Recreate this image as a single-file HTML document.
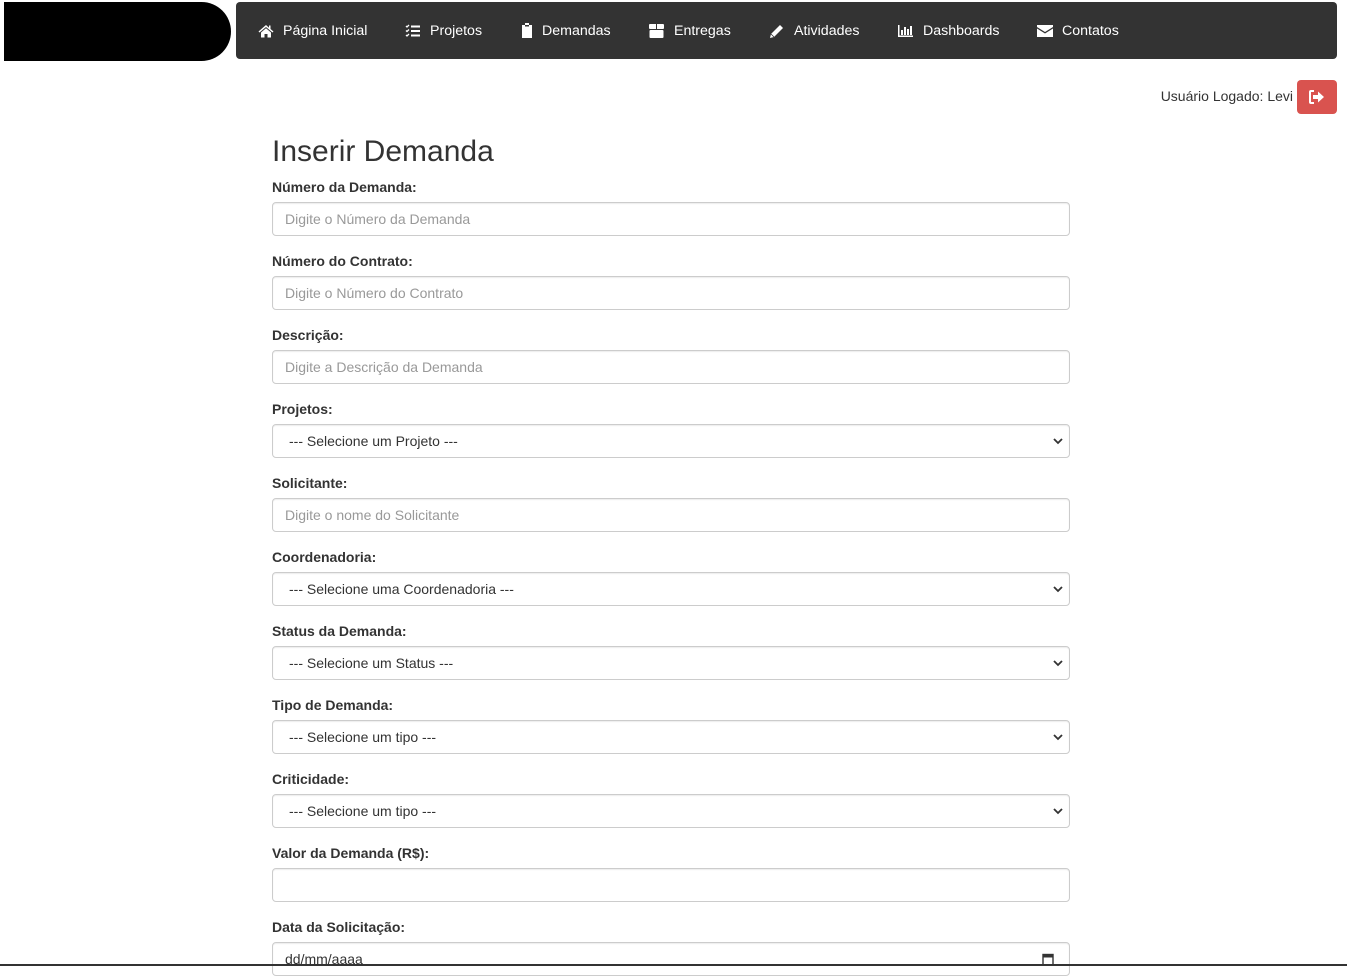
<!DOCTYPE html>
<html><head><meta charset="utf-8">
<style>
*{box-sizing:border-box;margin:0;padding:0}
html,body{width:1347px;height:966px;overflow:hidden;background:#fff;font-family:"Liberation Sans",Arial,sans-serif;color:#333}
.logo{position:absolute;left:4px;top:2px;width:227px;height:59px;background:#000;border-radius:0 30px 30px 0}
.nav{position:absolute;left:236px;top:2px;width:1101px;height:57px;background:#333;border-radius:4px}
.ni{position:absolute;top:1px;height:57px;line-height:57px;color:#fff;font-size:14.2px;white-space:nowrap}
.ni svg{position:absolute;top:21px;left:-25px}
.user{position:absolute;right:54px;top:88px;font-size:14px;color:#333}
.btn{position:absolute;left:1297px;top:80px;width:40px;height:34px;background:#d9534f;border-radius:4px}
h1{position:absolute;left:272px;top:135px;font-size:30px;font-weight:normal;color:#333}
.lbl{position:absolute;left:272px;font-size:14px;font-weight:bold;color:#333;margin-top:-1px}
.inp{position:absolute;left:272px;width:798px;height:34px;border:1px solid #ccc;border-radius:4px;font-size:14px;color:#999;padding-left:12px;line-height:32px;box-shadow:inset 0 1px 1px rgba(0,0,0,.075)}
.sel{color:#333;padding-left:16px}
.sel svg{position:absolute;right:6px;top:12px}
.bot{position:absolute;left:0;top:964px;width:1347px;height:2px;background:#333}
</style></head><body>
<div class="logo"></div>
<div class="nav">
 <div class="ni" style="left:47px"><svg width="16" height="14" viewBox="0 0 16 14"><path d="M8 1L0.5 7.5 1.5 8.5 8 3 14.5 8.5 15.5 7.5 12.5 5V1.5H11V3.8Z" fill="#fff"/><path d="M3 8.5L8 4.3 13 8.5V13.5H9.5V10H6.5V13.5H3Z" fill="#fff"/></svg>Página Inicial</div>
 <div class="ni" style="left:194px"><svg width="16" height="14" viewBox="0 0 16 14"><path d="M1 2l1 1 2-2M1 6.5l1 1 2-2M1 11l1 1 2-2" stroke="#fff" stroke-width="1.3" fill="none"/><rect x="6" y="1.5" width="9" height="2" fill="#fff"/><rect x="6" y="6" width="9" height="2" fill="#fff"/><rect x="6" y="10.5" width="9" height="2" fill="#fff"/></svg>Projetos</div>
 <div class="ni" style="left:306px"><svg width="12" height="15" viewBox="0 0 12 15" style="left:-21px;top:20px"><path d="M4 0h4v2h3v13H1V2h3z" fill="#fff"/><rect x="4" y="2" width="4" height="1.5" fill="#333"/></svg>Demandas</div>
 <div class="ni" style="left:438px"><svg width="15" height="14" viewBox="0 0 15 14"><rect x="0" y="0" width="15" height="5" rx="1" fill="#fff"/><rect x="0.5" y="6" width="14" height="8" rx="1" fill="#fff"/><rect x="7" y="0" width="1" height="5" fill="#333"/></svg>Entregas</div>
 <div class="ni" style="left:558px"><svg width="15" height="15" viewBox="0 0 15 15"><path d="M11 1l3 3-9 9-4 1 1-4z" fill="#fff"/><path d="M2 10l3 3" stroke="#333" stroke-width="0.8"/></svg>Atividades</div>
 <div class="ni" style="left:687px"><svg width="15" height="12" viewBox="0 0 15 12" style="top:22px"><path d="M0 0h1.5v10.5H15V12H0z" fill="#fff"/><rect x="3" y="5" width="2" height="5" fill="#fff"/><rect x="6" y="2" width="2" height="8" fill="#fff"/><rect x="9" y="4" width="2" height="6" fill="#fff"/><rect x="12" y="1" width="2" height="9" fill="#fff"/></svg>Dashboards</div>
 <div class="ni" style="left:826px"><svg width="16" height="12" viewBox="0 0 16 12" style="top:22px"><path d="M0 0h16v2L8 7 0 2z" fill="#fff"/><path d="M0 3.5L8 8.5 16 3.5V12H0z" fill="#fff"/></svg>Contatos</div>
</div>
<div class="user">Usuário Logado: Levi</div>
<div class="btn"><svg width="16" height="14" viewBox="0 0 16 14" style="position:absolute;left:12px;top:10px"><path d="M5 1H2Q1 1 1 2V12Q1 13 2 13H5" stroke="#fff" stroke-width="2" fill="none"/><path d="M4 5H9V1.5L15 7 9 12.5V9H4z" fill="#fff"/></svg></div>
<h1>Inserir Demanda</h1>

<div class="lbl" style="top:180px">Número da Demanda:</div>
<div class="inp" style="top:202px">Digite o Número da Demanda</div>
<div class="lbl" style="top:254px">Número do Contrato:</div>
<div class="inp" style="top:276px">Digite o Número do Contrato</div>
<div class="lbl" style="top:328px">Descrição:</div>
<div class="inp" style="top:350px">Digite a Descrição da Demanda</div>
<div class="lbl" style="top:402px">Projetos:</div>
<div class="inp sel" style="top:424px">--- Selecione um Projeto ---<svg width="10" height="8" viewBox="0 0 10 8"><path d="M1 2l4 4 4-4" stroke="#333" stroke-width="1.8" fill="none"/></svg></div>
<div class="lbl" style="top:476px">Solicitante:</div>
<div class="inp" style="top:498px">Digite o nome do Solicitante</div>
<div class="lbl" style="top:550px">Coordenadoria:</div>
<div class="inp sel" style="top:572px">--- Selecione uma Coordenadoria ---<svg width="10" height="8" viewBox="0 0 10 8"><path d="M1 2l4 4 4-4" stroke="#333" stroke-width="1.8" fill="none"/></svg></div>
<div class="lbl" style="top:624px">Status da Demanda:</div>
<div class="inp sel" style="top:646px">--- Selecione um Status ---<svg width="10" height="8" viewBox="0 0 10 8"><path d="M1 2l4 4 4-4" stroke="#333" stroke-width="1.8" fill="none"/></svg></div>
<div class="lbl" style="top:698px">Tipo de Demanda:</div>
<div class="inp sel" style="top:720px">--- Selecione um tipo ---<svg width="10" height="8" viewBox="0 0 10 8"><path d="M1 2l4 4 4-4" stroke="#333" stroke-width="1.8" fill="none"/></svg></div>
<div class="lbl" style="top:772px">Criticidade:</div>
<div class="inp sel" style="top:794px">--- Selecione um tipo ---<svg width="10" height="8" viewBox="0 0 10 8"><path d="M1 2l4 4 4-4" stroke="#333" stroke-width="1.8" fill="none"/></svg></div>
<div class="lbl" style="top:846px">Valor da Demanda (R$):</div>
<div class="inp" style="top:868px"></div>
<div class="lbl" style="top:920px">Data da Solicitação:</div>
<div class="inp" style="top:942px;color:#333;padding-top:0">dd/mm/aaaa<svg width="12" height="13" viewBox="0 0 12 13" style="position:absolute;right:15px;top:10px"><rect x="1" y="1.5" width="10" height="10.5" fill="none" stroke="#333" stroke-width="1.4"/><rect x="1" y="1.5" width="10" height="3" fill="#333"/></svg></div>
<div class="bot"></div>
</body></html>
